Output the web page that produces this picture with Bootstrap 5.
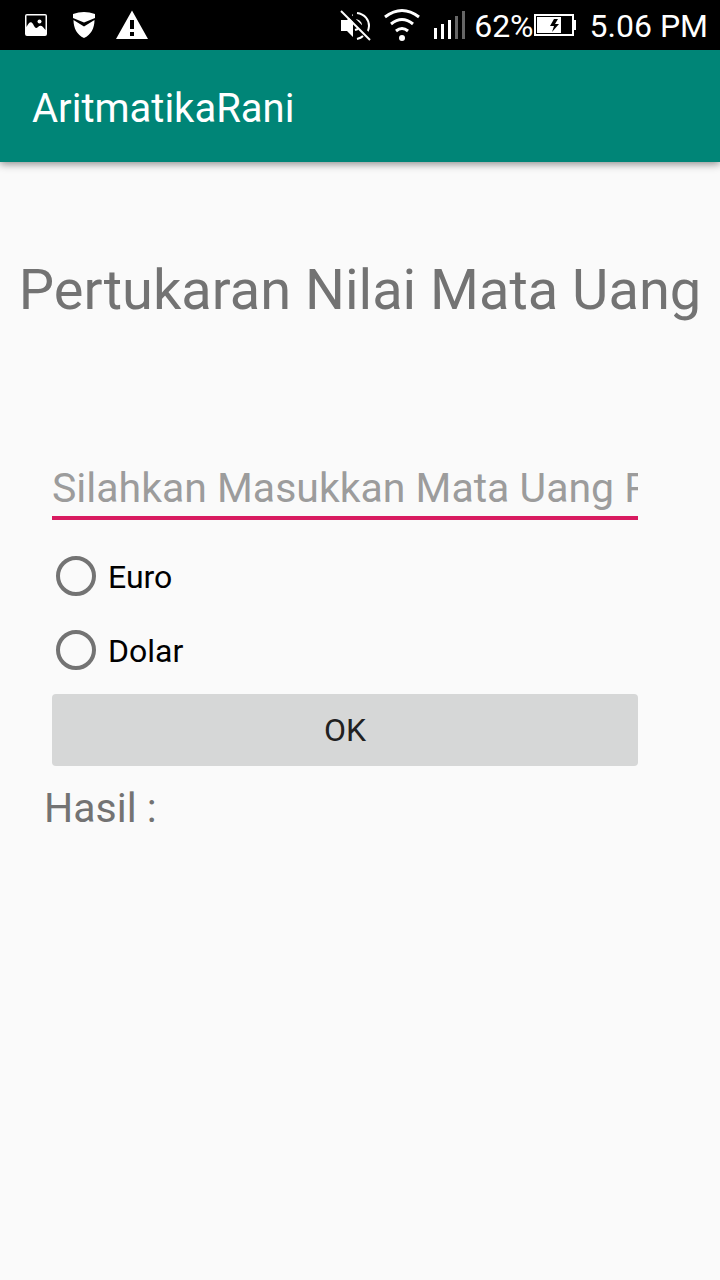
<!DOCTYPE html>
<html lang="id">
<head>
<meta charset="utf-8">
<meta name="viewport" content="width=device-width, initial-scale=1">
<title>AritmatikaRani</title>
<link href="https://cdn.jsdelivr.net/npm/bootstrap@5.3.0/dist/css/bootstrap.min.css" rel="stylesheet">
<style>
  body { font-family: Roboto, "Liberation Sans", sans-serif; background: #fafafa; color: #737373; }
  .status-bar { background: #000; color: #fff; height: 50px; font-size: 32px; line-height: 48px; padding: 0 12px 0 24px; }
  .status-bar svg { display: block; flex: none; }
  .status-bar span { padding-top: 2px; }
  .signal-icon { margin-left: 10px; }
  .clock { margin-left: 14px; }
  .app-bar { background: #008577; min-height: 112px; padding: 6px 32px 0; box-shadow: 0 2px 8px rgba(0, 0, 0, .45); }
  .app-title { color: #fff; font-size: 40px; line-height: 48px; }
  .page-title { font-size: 56px; line-height: 64px; padding: 96px 12px 0; }
  .exchange-form { padding: 130px 82px 0 52px; }
  .amount-field { font-size: 41px; line-height: 48px; border: 0; border-bottom: 4px solid #d81b60; border-radius: 0; background: transparent; padding: 12px 0 4px; height: 68px; margin-bottom: 19px; color: #000; }
  .amount-field:focus { background: transparent; border-color: #d81b60; box-shadow: none; }
  .amount-field::placeholder { color: #9c9c9c; opacity: 1; }
  .currency { min-height: 74px; padding-left: 4px; gap: 12px; color: #000; font-size: 32px; line-height: 40px; }
  .currency label { padding-top: 2px; }
  .currency .form-check-input { width: 40px; height: 40px; border: 4px solid #737373; background-color: transparent; margin: 0; float: none; flex: none; }
  .ok-button { height: 72px; background: #d6d7d7; color: #212121; border: 0; border-radius: 4px; font-size: 32px; line-height: 40px; margin-top: 7px; }
  .result { font-size: 41px; line-height: 48px; padding: 18px 44px 0; }
</style>
</head>
<body>
<header>
  <div class="status-bar d-flex align-items-center justify-content-between">
    <div class="d-flex align-items-center">
      <svg width="24" height="24" viewBox="0 0 24 24" aria-hidden="true"><path fill="#fff" fill-rule="evenodd" d="M3 1H21Q23 1 23 3V21Q23 23 21 23H3Q1 23 1 21V3Q1 1 3 1ZM2.500 2.500V14C5 9 7 8 9 11C11 15 12 16 14 14C17 11 19 14 21.500 17V2.500Z"/><circle cx="15.500" cy="8.500" r="2" fill="#fff"/></svg>
      <svg class="ms-4" width="24" height="28" viewBox="0 0 24 28" aria-hidden="true"><path fill="#fff" d="M1 3Q12 -1 23 3V7L12 11.500 1 7ZM1.500 9L12 15.500 22.500 9C22.500 17 19 24 12 27C5 24 1.500 17 1.500 9Z"/></svg>
      <svg class="ms-3" width="40" height="30" viewBox="0 0 40 30" aria-hidden="true"><path fill="#fff" fill-rule="evenodd" d="M20 .5L36 29H4ZM18 10V19H22V10ZM18 22V26H22V22Z"/></svg>
    </div>
    <div class="d-flex align-items-center">
      <svg width="32" height="32" viewBox="0 0 32 32" aria-hidden="true"><path fill="#fff" d="M1 11H7L13 5V28L7 22H1Z"/><path fill="none" stroke="#fff" stroke-width="2" d="M17 4C25 5 29 11 29 17C29 20 28 22 27 24M16 11Q22 13 21 18M17 30Q21 29 23 27M15 21L18 20"/><path stroke="#000" stroke-width="4" d="M4 1L31 28"/><path stroke="#fff" stroke-width="2" d="M1 2L30 31"/></svg>
      <svg class="ms-2" width="44" height="34" viewBox="0 0 44 34" aria-hidden="true"><g fill="none" stroke="#fff" stroke-width="3"><path d="M5 9Q22 -4 39 9M11 16Q22 7 33 16M16 23Q22 18 28 23"/></g><circle cx="22" cy="30" r="3" fill="#fff"/></svg>
      <svg class="signal-icon" width="32" height="30" viewBox="0 0 32 30" aria-hidden="true"><path fill="#fff" d="M0 18H3V29H0ZM7 14H10V29H7ZM14 10H17V29H14Z"/><path fill="#666" d="M21 6H24V29H21ZM28 1H31V29H28Z"/></svg>
      <span class="ms-2">62%</span>
      <svg width="42" height="22" viewBox="0 0 42 22" aria-hidden="true"><path fill="none" stroke="#fff" stroke-width="2" d="M1 1H39V21H1Z"/><path fill="#fff" d="M3 3H27V19H3ZM39 6H42V16H39Z"/><path fill="#000" d="M20 5L16 12H20L18 18 25 10H21L24 5Z"/></svg>
      <span class="clock">5.06 PM</span>
    </div>
  </div>
  <nav class="app-bar d-flex align-items-center"><span class="app-title">AritmatikaRani</span></nav>
</header>
<main>
  <h1 class="page-title text-center fw-normal m-0">Pertukaran Nilai Mata Uang</h1>
  <form class="exchange-form">
    <input type="text" class="form-control amount-field" id="amount" aria-label="Mata uang" placeholder="Silahkan Masukkan Mata Uang Rupiah">
    <div class="currency d-flex align-items-center">
      <input class="form-check-input" type="radio" name="currency" id="euro">
      <label for="euro">Euro</label>
    </div>
    <div class="currency d-flex align-items-center">
      <input class="form-check-input" type="radio" name="currency" id="dolar">
      <label for="dolar">Dolar</label>
    </div>
    <button type="button" class="btn ok-button w-100">OK</button>
  </form>
  <div class="result">Hasil :</div>
</main>
<script src="https://cdn.jsdelivr.net/npm/bootstrap@5.3.0/dist/js/bootstrap.bundle.min.js"></script>
</body>
</html>
